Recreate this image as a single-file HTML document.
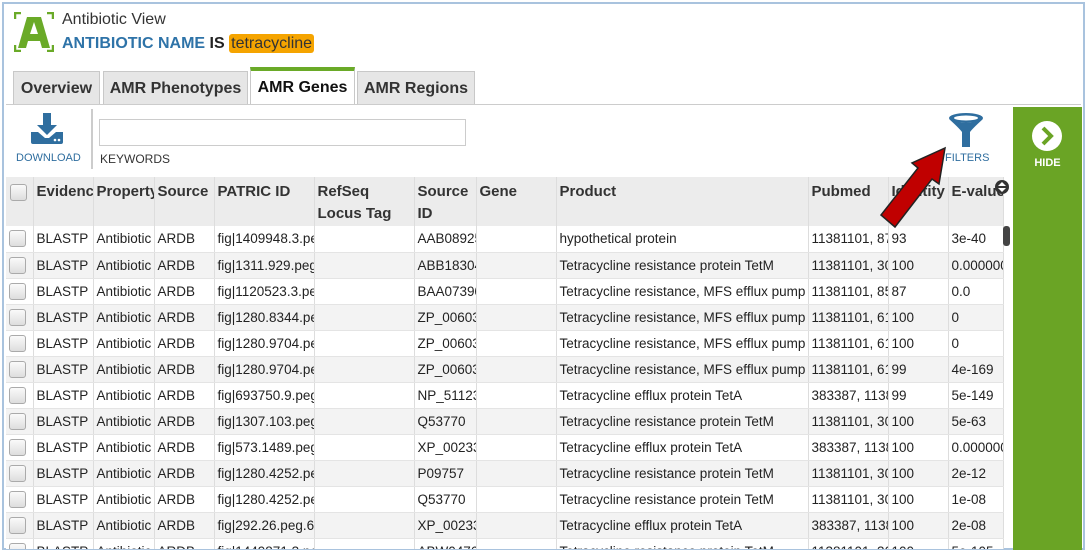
<!DOCTYPE html>
<html><head><meta charset="utf-8"><style>
*{box-sizing:border-box;margin:0;padding:0}
body{width:1087px;height:555px;background:#fff;font-family:"Liberation Sans",Arial,sans-serif;position:relative;overflow:hidden}
.frame{position:absolute;left:2px;top:2px;width:1083px;height:548px;border:2px solid #a9c3de}
.abs{position:absolute}
.tab{position:absolute;top:71px;height:34px;background:#e6e6e6;border:1px solid #c8c8c8;border-bottom:none;font-weight:bold;font-size:16px;color:#333;text-align:center;line-height:34px}
table{border-collapse:collapse;table-layout:fixed;width:997px;position:absolute;left:2px;top:2px;font-size:13.5px;color:#222}
td,th{overflow:hidden;white-space:nowrap;border-right:1px solid #ddd;padding:0 0 0 3px;text-align:left}
th{background:#ececec;height:49px;vertical-align:top;font-size:15px;font-weight:bold;color:#333;padding:0 0 0 3px}
th div{height:49px;overflow:hidden;padding-top:4px;line-height:22px;white-space:normal}
th div.nw{white-space:nowrap}
td{height:26px;border-bottom:1px solid #e4e4e4}
tbody tr:nth-child(even) td{background:#f3f3f3}
tbody tr:nth-child(odd) td{background:#fff}
.cb{display:inline-block;width:17px;height:17px;border:1px solid #aaa;border-radius:3px;background:linear-gradient(#fafafa,#ddd);vertical-align:middle}
</style></head><body>
<div class="frame"></div>
<svg class="abs" style="left:14px;top:12px" width="40" height="40" viewBox="0 0 40 40">
<path d="M1 7V1h6M33 1h6v6M39 33v6h-6M7 39H1v-6" stroke="#6aaa28" stroke-width="2.5" fill="none"/>
<path d="M13 5h14l9 31h-8l-2-7H14l-2 7H4zM16 22h8l-4-12z" fill="#6aaa28" fill-rule="evenodd"/>
</svg>
<div class="abs" style="left:62px;top:11px;font-size:16px;color:#333">Antibiotic View</div>
<div class="abs" style="left:62px;top:34px;font-size:16px;font-weight:bold;color:#2e73a8;line-height:20px">ANTIBIOTIC NAME <span style="color:#222">IS</span> <span style="background:#f5a400;color:#333;font-weight:normal;border-radius:3px;padding:1px 2px">tetracycline</span></div>
<div class="tab" style="left:13px;width:87px">Overview</div>
<div class="tab" style="left:103px;width:145px">AMR Phenotypes</div>
<div class="tab" style="left:250px;width:105px;background:#fff;color:#111;border-top:4px solid #6aaa28;top:67px;height:38px">AMR Genes</div>
<div class="tab" style="left:357px;width:118px">AMR Regions</div>
<div class="abs" style="left:6px;top:104px;width:1075px;height:1px;background:#ccc"></div>
<svg class="abs" style="left:30px;top:112px" width="34" height="34" viewBox="0 0 34 34">
<path d="M13 1h8v12h6l-10 10-10-10h6z" fill="#2f6e9f"/>
<path d="M1 20h7l7 6h4l7-6h7v10a2 2 0 0 1-2 2H3a2 2 0 0 1-2-2z" fill="#2f6e9f"/>
<circle cx="25" cy="28" r="1.3" fill="#fff"/><circle cx="29" cy="28" r="1.3" fill="#fff"/>
</svg>
<div class="abs" style="left:16px;top:152px;font-size:11px;color:#2f6e9f">DOWNLOAD</div>
<div class="abs" style="left:91px;top:109px;width:2px;height:60px;background:#ccc"></div>
<div class="abs" style="left:99px;top:119px;width:367px;height:27px;border:1px solid #ccc"></div>
<div class="abs" style="left:100px;top:152px;font-size:12px;color:#333">KEYWORDS</div>
<svg class="abs" style="left:947px;top:112px" width="38" height="36" viewBox="0 0 38 36">
<ellipse cx="19" cy="6" rx="17" ry="5" fill="#2f6e9f"/><ellipse cx="19" cy="6" rx="12" ry="2.5" fill="#fff"/>
<path d="M2 7Q12 16 15 20V35h8V20Q26 16 36 7Q28 11 19 11Q10 11 2 7z" fill="#2f6e9f"/>
</svg>
<div class="abs" style="left:945px;top:152px;font-size:11px;color:#2f6e9f">FILTERS</div>
<div class="abs" style="left:1013px;top:107px;width:69px;height:443px;background:#6aa425"></div>
<svg class="abs" style="left:1031px;top:120px" width="32" height="32" viewBox="0 0 32 32"><circle cx="16" cy="16" r="15" fill="#fff"/><path d="M12 8l8 8-8 8" stroke="#6aa425" stroke-width="4" fill="none"/></svg>
<div class="abs" style="left:1013px;top:157px;width:69px;text-align:center;font-size:11px;font-weight:bold;color:#fff">HIDE</div>
<div class="abs" style="left:4px;top:175px;width:1006px;height:374px;overflow:hidden">
<table>
<colgroup><col style="width:27px"><col style="width:60px"><col style="width:61px"><col style="width:60px"><col style="width:100px"><col style="width:100px"><col style="width:62px"><col style="width:80px"><col style="width:252px"><col style="width:80px"><col style="width:60px"><col style="width:55px"></colgroup>
<thead><tr><th style="padding-left:4px"><div><span class="cb"></span></div></th><th><div class="nw">Evidence</div></th><th><div class="nw">Property</div></th><th><div class="nw">Source</div></th><th><div class="nw">PATRIC ID</div></th><th><div>RefSeq<br>Locus Tag</div></th><th><div>Source<br>ID</div></th><th><div class="nw">Gene</div></th><th><div class="nw">Product</div></th><th><div class="nw">Pubmed</div></th><th><div class="nw">Identity</div></th><th><div class="nw">E-value</div></th></tr></thead>
<tbody>
<tr><td><span class="cb"></span></td><td>BLASTP</td><td>Antibiotic</td><td>ARDB</td><td>fig|1409948.3.peg</td><td></td><td>AAB08925</td><td></td><td>hypothetical protein</td><td>11381101, 87</td><td>93</td><td>3e-40</td></tr>
<tr><td><span class="cb"></span></td><td>BLASTP</td><td>Antibiotic</td><td>ARDB</td><td>fig|1311.929.peg</td><td></td><td>ABB18304</td><td></td><td>Tetracycline resistance protein TetM</td><td>11381101, 30</td><td>100</td><td>0.000000</td></tr>
<tr><td><span class="cb"></span></td><td>BLASTP</td><td>Antibiotic</td><td>ARDB</td><td>fig|1120523.3.peg</td><td></td><td>BAA07390</td><td></td><td>Tetracycline resistance, MFS efflux pump</td><td>11381101, 85</td><td>87</td><td>0.0</td></tr>
<tr><td><span class="cb"></span></td><td>BLASTP</td><td>Antibiotic</td><td>ARDB</td><td>fig|1280.8344.peg</td><td></td><td>ZP_00603</td><td></td><td>Tetracycline resistance, MFS efflux pump</td><td>11381101, 61</td><td>100</td><td>0</td></tr>
<tr><td><span class="cb"></span></td><td>BLASTP</td><td>Antibiotic</td><td>ARDB</td><td>fig|1280.9704.peg</td><td></td><td>ZP_00603</td><td></td><td>Tetracycline resistance, MFS efflux pump</td><td>11381101, 61</td><td>100</td><td>0</td></tr>
<tr><td><span class="cb"></span></td><td>BLASTP</td><td>Antibiotic</td><td>ARDB</td><td>fig|1280.9704.peg</td><td></td><td>ZP_00603</td><td></td><td>Tetracycline resistance, MFS efflux pump</td><td>11381101, 61</td><td>99</td><td>4e-169</td></tr>
<tr><td><span class="cb"></span></td><td>BLASTP</td><td>Antibiotic</td><td>ARDB</td><td>fig|693750.9.peg</td><td></td><td>NP_51123</td><td></td><td>Tetracycline efflux protein TetA</td><td>383387, 1138</td><td>99</td><td>5e-149</td></tr>
<tr><td><span class="cb"></span></td><td>BLASTP</td><td>Antibiotic</td><td>ARDB</td><td>fig|1307.103.peg</td><td></td><td>Q53770</td><td></td><td>Tetracycline resistance protein TetM</td><td>11381101, 30</td><td>100</td><td>5e-63</td></tr>
<tr><td><span class="cb"></span></td><td>BLASTP</td><td>Antibiotic</td><td>ARDB</td><td>fig|573.1489.peg</td><td></td><td>XP_00233</td><td></td><td>Tetracycline efflux protein TetA</td><td>383387, 1138</td><td>100</td><td>0.000000</td></tr>
<tr><td><span class="cb"></span></td><td>BLASTP</td><td>Antibiotic</td><td>ARDB</td><td>fig|1280.4252.peg</td><td></td><td>P09757</td><td></td><td>Tetracycline resistance protein TetM</td><td>11381101, 30</td><td>100</td><td>2e-12</td></tr>
<tr><td><span class="cb"></span></td><td>BLASTP</td><td>Antibiotic</td><td>ARDB</td><td>fig|1280.4252.peg</td><td></td><td>Q53770</td><td></td><td>Tetracycline resistance protein TetM</td><td>11381101, 30</td><td>100</td><td>1e-08</td></tr>
<tr><td><span class="cb"></span></td><td>BLASTP</td><td>Antibiotic</td><td>ARDB</td><td>fig|292.26.peg.6</td><td></td><td>XP_00233</td><td></td><td>Tetracycline efflux protein TetA</td><td>383387, 1138</td><td>100</td><td>2e-08</td></tr>
<tr><td><span class="cb"></span></td><td>BLASTP</td><td>Antibiotic</td><td>ARDB</td><td>fig|1449871.3.peg</td><td></td><td>ABW0476</td><td></td><td>Tetracycline resistance protein TetM</td><td>11381101, 30</td><td>100</td><td>5e-105</td></tr>
</tbody></table>
</div>
<div class="abs" style="left:1003px;top:226px;width:7px;height:20px;background:#444;border-radius:3px"></div>
<svg class="abs" style="left:994px;top:179px" width="16" height="16" viewBox="0 0 16 16"><circle cx="8" cy="8" r="7" fill="#333"/><path d="M4 7l4-4 4 4zM4 9l4 4 4-4z" fill="#fff"/></svg>
<svg class="abs" style="left:0;top:0" width="1087" height="555">
<polygon points="945,148 939,184 932,179 895,227 881,215 918,168 912,163" fill="#c00000" stroke="#222" stroke-width="1.5"/>
</svg>
</body></html>
